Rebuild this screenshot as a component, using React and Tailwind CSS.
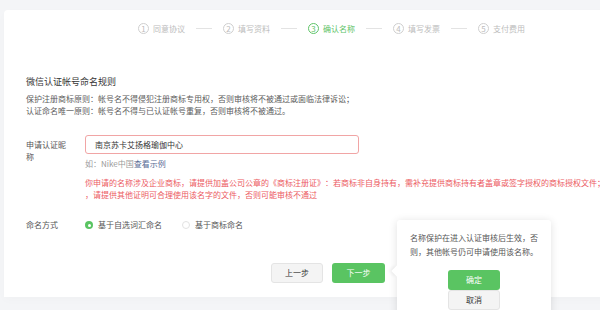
import React from 'react';

const steps = [
    { n: 1, label: '同意协议' },
    { n: 2, label: '填写资料' },
    { n: 3, label: '确认名称', active: true },
    { n: 4, label: '填写发票' },
    { n: 5, label: '支付费用' },
];

const Steps = () => (
    <div className="flex items-center pl-[134px] pt-[13px] h-[24px]">
        {steps.map((s, i) => (
            <React.Fragment key={s.n}>
                <div className={`flex items-center gap-[4px] ${s.active ? 'text-[#5ec467]' : 'text-[#bdbdbd]'}`}>
                    <span className={`w-[11px] h-[11px] rounded-full border flex items-center justify-center text-[8px] leading-none ${s.active ? 'border-[#5ec467]' : 'border-[#cfcfcf]'}`}>
                        {s.n}
                    </span>
                    <span className="text-[8px] leading-[11px] w-[32px] whitespace-nowrap">{s.label}</span>
                </div>
                {i < steps.length - 1 && <div className="w-[16px] h-px bg-[#e3e3e3] mx-[11px]"></div>}
            </React.Fragment>
        ))}
    </div>
);

const Radio = ({ checked, label }) => (
    <label className="flex items-center gap-[5px]">
        <span className={`w-[8px] h-[8px] rounded-full flex items-center justify-center ${checked ? 'bg-[#5ac462]' : 'border border-[#e2e2e2] bg-white'}`}>
            {checked && <span className="w-[3px] h-[3px] rounded-full bg-white"></span>}
        </span>
        <span className="text-[8px] leading-[12px] text-[#555]">{label}</span>
    </label>
);

export default function App() {
    return (
        <div className="w-[600px] h-[310px] overflow-hidden bg-[#f4f5f7] pl-[4px] pt-[10px] font-['Noto_Sans_CJK_SC',sans-serif]">
            <div className="relative w-[660px] h-[287px] bg-white rounded-tl-[4px] shadow-[0_3px_10px_rgba(0,0,0,0.02)]">
                <Steps />

                <div className="pl-[22px]">
                    <h3 className="mt-[42px] text-[9px] leading-[12px] text-[#353535]">微信认证帐号命名规则</h3>
                    <div className="mt-[5px] text-[8px] leading-[12px] text-[#5c5c5c]">
                        <p>保护注册商标原则：帐号名不得侵犯注册商标专用权，否则审核将不被通过或面临法律诉讼；</p>
                        <p>认证命名唯一原则：帐号名不得与已认证帐号重复，否则审核将不被通过。</p>
                    </div>

                    <div className="flex mt-[18px]">
                        <div className="w-[59px] pt-[4px] pr-[17px] text-[8px] leading-[12px] text-[#555]">申请认证昵称</div>
                        <div className="flex flex-col">
                            <div className="w-[274px] h-[19px] border border-[#f1a5a5] rounded-[3px] flex items-center pl-[9px] text-[8px] text-[#353535]">
                                南京苏卡艾扬格瑜伽中心
                            </div>
                            <p className="mt-[4px] text-[8px] leading-[12px] text-[#9a9a9a]">
                                如：Nike中国<span className="text-[#576b95]">查看示例</span>
                            </p>
                            <div className="mt-[7px] text-[8px] leading-[12px] text-[#ec5a5f] whitespace-nowrap [text-spacing-trim:space-all]">
                                <p>你申请的名称涉及企业商标，请提供加盖公司公章的《商标注册证》：若商标非自身持有，需补充提供商标持有者盖章或签字授权的商标授权文件；若</p>
                                <p>，请提供其他证明可合理使用该名字的文件，否则可能审核不通过</p>
                            </div>
                        </div>
                    </div>

                    <div className="flex items-center mt-[18px]">
                        <div className="w-[59px] text-[8px] leading-[12px] text-[#555]">命名方式</div>
                        <div className="flex items-center gap-[20px]">
                            <Radio checked label="基于自选词汇命名" />
                            <Radio label="基于商标命名" />
                        </div>
                    </div>

                    <div className="flex gap-[9px] ml-[245px] mt-[32px]">
                        <button className="w-[52px] h-[20px] rounded-[3px] border border-[#e4e4e4] bg-[#f4f4f4] text-[8px] text-[#353535]">上一步</button>
                        <button className="w-[53px] h-[20px] rounded-[3px] bg-[#5ac462] text-[8px] text-white">下一步</button>
                    </div>
                </div>

                <div className="absolute left-[393px] top-[210px] w-[154px] h-[110px] bg-white rounded-[3px] shadow-[0_1px_8px_rgba(0,0,0,0.12)]">
                    <span className="absolute -left-[4px] top-[47px] w-[8px] h-[8px] bg-white rotate-45 shadow-[-2px_2px_3px_rgba(0,0,0,0.05)]"></span>
                    <p className="relative pt-[11px] px-[13px] text-[8px] leading-[14px] text-[#555]">
                        名称保护在进入认证审核后生效，否则，其他帐号仍可申请使用该名称。
                    </p>
                    <div className="flex flex-col items-center mt-[11px]">
                        <button className="w-[52px] h-[20px] rounded-[3px] bg-[#5ac462] text-[8px] text-white">确定</button>
                        <button className="w-[52px] h-[20px] rounded-[3px] border border-[#e4e4e4] bg-[#f4f4f4] text-[8px] text-[#353535]">取消</button>
                    </div>
                </div>
            </div>
        </div>
    );
}
